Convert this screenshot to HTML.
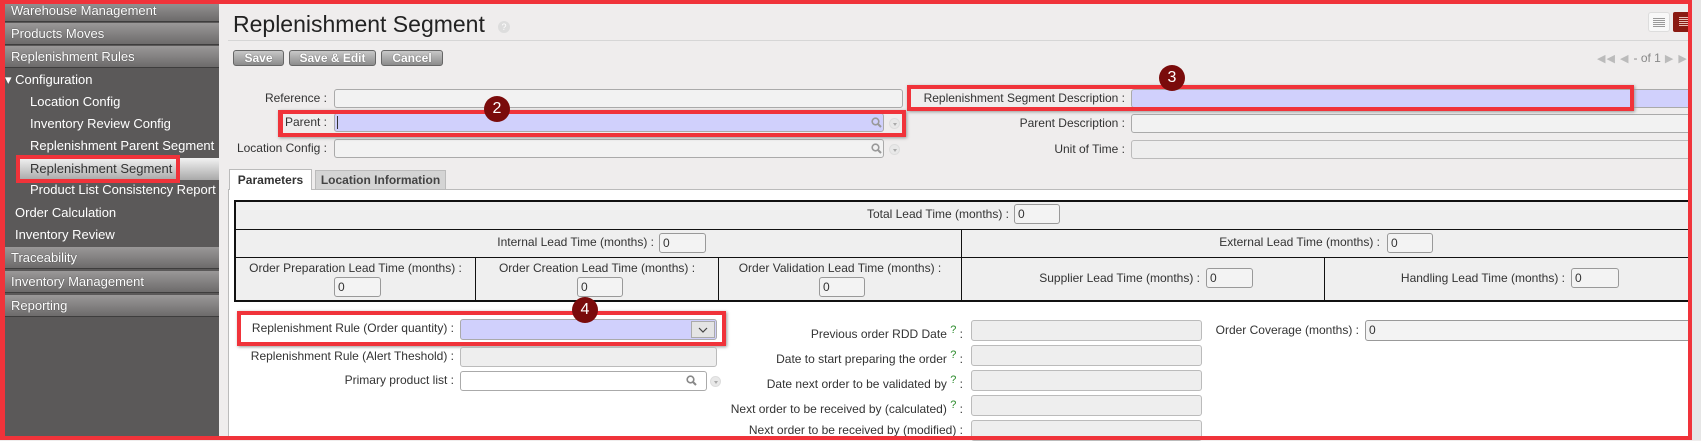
<!DOCTYPE html>
<html><head><meta charset="utf-8"><style>
*{box-sizing:border-box;margin:0;padding:0}
body{width:1701px;height:440px;overflow:hidden;background:#efeded;font-family:"Liberation Sans",Arial,sans-serif;font-size:12px;color:#333;position:relative}
.a{position:absolute}
#side{left:0;top:0;width:219px;height:440px;background:#5b5959}
.hd{position:absolute;left:5px;width:214px;height:22px;background:linear-gradient(#9a9898,#6d6b6b);color:#fff;font-size:13px;line-height:22px;padding-left:6px;border-bottom:1px solid #3e3d3d;text-shadow:0 0 1px #333}
.it{position:absolute;color:#fff;font-size:13px;line-height:20px;white-space:nowrap}
.lbl{position:absolute;text-align:right;white-space:nowrap;font-size:12px;color:#333;line-height:19px}
.inp{position:absolute;height:19px;border:1px solid #aaa;border-radius:3px;background:#f2f2f2}
.dis{background:#eeeeee;border-color:#bbb}
.lav{background:#d0d0fc}
.wh{background:#fff}
.btn{position:absolute;top:50px;height:16px;border:1px solid #666;border-radius:3px;background:linear-gradient(#c8c8c8,#8c8c8c);color:#fff;font-weight:bold;font-size:12px;text-align:center;line-height:14px;text-shadow:0 0 1px #444}
.red{position:absolute;border:4px solid #f0333a;box-shadow:1px 1px 3px #999}
.badge{position:absolute;width:26px;height:26px;border-radius:13px;background:#7a0b0b;color:#fff;font-size:16px;text-align:center;line-height:26px}
.num{position:absolute;height:20px;border:1px solid #999;border-radius:3px;background:#f3f3f3;font-size:12px;line-height:18px;padding-left:3px}
.q{color:#2a8a2a;font-size:11px;vertical-align:5px}
.dd{position:absolute;width:11px;height:11px;border-radius:6px;background:#e8e8e8;border:1px solid #ddd}
.dd:after{content:"";position:absolute;left:3px;top:4px;border:2px solid transparent;border-top:3px solid #aaa}
</style></head><body>
<div id="side" class="a">
<div class="hd" style="top:0">Warehouse Management</div>
<div class="hd" style="top:23px">Products Moves</div>
<div class="hd" style="top:46px">Replenishment Rules</div>
<div class="it" style="left:5px;top:70px">▾ Configuration</div>
<div class="it" style="left:30px;top:92px">Location Config</div>
<div class="it" style="left:30px;top:114px">Inventory Review Config</div>
<div class="it" style="left:30px;top:136px">Replenishment Parent Segment</div>
<div class="a" style="left:20px;top:158px;width:199px;height:22px;background:linear-gradient(#f2f2f2,#a9a9a9)"></div>
<div class="it" style="left:30px;top:158px;color:#333;line-height:22px">Replenishment Segment</div>
<div class="red" style="left:16px;top:155px;width:164px;height:28px;box-shadow:none"></div>
<div class="it" style="left:30px;top:180px">Product List Consistency Report</div>
<div class="it" style="left:15px;top:203px">Order Calculation</div>
<div class="it" style="left:15px;top:225px">Inventory Review</div>
<div class="hd" style="top:247px">Traceability</div>
<div class="hd" style="top:271px">Inventory Management</div>
<div class="hd" style="top:295px">Reporting</div>
</div>

<div class="a" style="left:233px;top:11px;font-size:23px;color:#222">Replenishment Segment</div>
<div class="a" style="left:498px;top:21px;width:12px;height:12px;border-radius:6px;background:#ddd;color:#fff;font-size:9px;text-align:center;line-height:12px">?</div>
<div class="a" style="left:228px;top:40px;width:1460px;height:1px;background:#d6d6d6"></div>
<div class="btn" style="left:233px;width:51px">Save</div>
<div class="btn" style="left:289px;width:87px">Save &amp; Edit</div>
<div class="btn" style="left:381px;width:62px">Cancel</div>
<div class="a" style="left:1648px;top:12px;width:22px;height:20px;border-radius:3px;background:#f8f8f8;border:1px solid #ddd"><div style="margin:5px 4px;height:9px;background:repeating-linear-gradient(#999 0 1px,transparent 1px 2px)"></div></div>
<div class="a" style="left:1673px;top:12px;width:22px;height:20px;border-radius:2px;background:#8a1a12"><div style="margin:5px 6px;height:9px;background:repeating-linear-gradient(#e8c0b8 0 1px,transparent 1px 2px)"></div></div>
<div class="a" style="left:1597px;top:51px;color:#bbb;font-size:11px;letter-spacing:1px">◀◀ ◀ <span style="color:#888;letter-spacing:0;font-size:12px">- of 1</span> ▶ ▶</div>

<div class="lbl" style="left:230px;width:97px;top:89px">Reference :</div>
<div class="inp" style="left:334px;top:89px;width:569px"></div>
<div class="lbl" style="left:230px;width:97px;top:113px">Parent :</div>
<div class="inp lav" style="left:334px;top:113px;width:550px"></div>
<div class="a" style="left:337px;top:116px;width:1px;height:13px;background:#333"></div>
<div class="lbl" style="left:230px;width:97px;top:139px">Location Config :</div>
<div class="inp" style="left:334px;top:139px;width:550px"></div>
<svg class="a" style="left:871px;top:117px" width="11" height="11"><circle cx="4.5" cy="4.5" r="3.3" fill="none" stroke="#999" stroke-width="1.6"/><path d="M7 7L10 10" stroke="#999" stroke-width="2"/></svg>
<svg class="a" style="left:871px;top:143px" width="11" height="11"><circle cx="4.5" cy="4.5" r="3.3" fill="none" stroke="#999" stroke-width="1.6"/><path d="M7 7L10 10" stroke="#999" stroke-width="2"/></svg>
<div class="dd" style="left:889px;top:118px"></div>
<div class="dd" style="left:889px;top:144px"></div>
<div class="red" style="left:278px;top:110px;width:628px;height:27px;border-left-width:5px"></div>
<div class="badge" style="left:484px;top:96px">2</div>

<div class="lbl" style="left:900px;width:225px;top:89px">Replenishment Segment Description :</div>
<div class="inp lav" style="left:1131px;top:89px;width:560px"></div>
<div class="lbl" style="left:900px;width:225px;top:114px">Parent Description :</div>
<div class="inp" style="left:1131px;top:114px;width:560px"></div>
<div class="lbl" style="left:900px;width:225px;top:140px">Unit of Time :</div>
<div class="inp dis" style="left:1131px;top:140px;width:560px"></div>
<div class="red" style="left:907px;top:85px;width:727px;height:26px"></div>
<div class="badge" style="left:1159px;top:65px">3</div>

<div class="a" style="left:228px;top:189px;width:1462px;height:251px;background:#fff;border:1px solid #bbb"></div>
<div class="a" style="left:229px;top:169px;width:83px;height:21px;background:#fff;border:1px solid #bbb;border-bottom:none;font-weight:bold;font-size:12px;line-height:20px;text-align:center;color:#333">Parameters</div>
<div class="a" style="left:315px;top:170px;width:131px;height:19px;background:#d4d4d4;border:1px solid #bbb;border-bottom:none;font-weight:bold;font-size:12px;line-height:18px;text-align:center;color:#444">Location Information</div>

<div class="a" style="left:234px;top:200px;width:1460px;height:102px;border:2px solid #111;border-right:none;background:#efefef"></div>
<div class="a" style="left:236px;top:229px;width:1458px;height:1px;background:#111"></div>
<div class="a" style="left:236px;top:257px;width:1458px;height:1px;background:#111"></div>
<div class="a" style="left:961px;top:229px;width:1px;height:72px;background:#111"></div>
<div class="a" style="left:475px;top:257px;width:1px;height:44px;background:#111"></div>
<div class="a" style="left:718px;top:257px;width:1px;height:44px;background:#111"></div>
<div class="a" style="left:1324px;top:257px;width:1px;height:44px;background:#111"></div>
<div class="lbl" style="left:700px;width:309px;top:205px">Total Lead Time (months) :</div><div class="num" style="left:1014px;top:204px;width:46px">0</div>
<div class="lbl" style="left:400px;width:254px;top:233px">Internal Lead Time (months) :</div><div class="num" style="left:659px;top:233px;width:47px">0</div>
<div class="lbl" style="left:1100px;width:280px;top:233px">External Lead Time (months) :</div><div class="num" style="left:1387px;top:233px;width:46px">0</div>
<div class="lbl" style="left:236px;width:239px;top:259px;text-align:center">Order Preparation Lead Time (months) :</div><div class="num" style="left:334px;top:277px;width:47px">0</div>
<div class="lbl" style="left:476px;width:242px;top:259px;text-align:center">Order Creation Lead Time (months) :</div><div class="num" style="left:577px;top:277px;width:46px">0</div>
<div class="lbl" style="left:719px;width:242px;top:259px;text-align:center">Order Validation Lead Time (months) :</div><div class="num" style="left:819px;top:277px;width:46px">0</div>
<div class="lbl" style="left:962px;width:238px;top:269px">Supplier Lead Time (months) :</div><div class="num" style="left:1206px;top:268px;width:47px">0</div>
<div class="lbl" style="left:1325px;width:240px;top:269px">Handling Lead Time (months) :</div><div class="num" style="left:1571px;top:268px;width:48px">0</div>

<div class="lbl" style="left:236px;width:218px;top:319px">Replenishment Rule (Order quantity) :</div>
<div class="inp lav" style="left:460px;top:319px;width:257px;height:21px"></div>
<div class="a" style="left:691px;top:321px;width:24px;height:17px;background:#e4e4e4;border:1px solid #aaa"><svg width="22" height="15"><path d="M7 6L11 10L15 6" fill="none" stroke="#444" stroke-width="1.2"/></svg></div>
<div class="red" style="left:237px;top:311px;width:489px;height:35px"></div>
<div class="badge" style="left:572px;top:297px">4</div>
<div class="lbl" style="left:236px;width:218px;top:347px">Replenishment Rule (Alert Theshold) :</div>
<div class="inp dis" style="left:460px;top:347px;width:257px;height:20px"></div>
<div class="lbl" style="left:236px;width:218px;top:371px">Primary product list :</div>
<div class="inp wh" style="left:460px;top:371px;width:247px;height:20px"></div>
<svg class="a" style="left:686px;top:375px" width="11" height="11"><circle cx="4.5" cy="4.5" r="3.3" fill="none" stroke="#888" stroke-width="1.6"/><path d="M7 7L10 10" stroke="#888" stroke-width="2"/></svg>
<div class="dd" style="left:710px;top:376px"></div>

<div class="lbl" style="left:700px;width:263px;top:321px">Previous order RDD Date <span class="q">?</span> :</div>
<div class="lbl" style="left:700px;width:263px;top:346px">Date to start preparing the order <span class="q">?</span> :</div>
<div class="lbl" style="left:700px;width:263px;top:371px">Date next order to be validated by <span class="q">?</span> :</div>
<div class="lbl" style="left:660px;width:303px;top:396px">Next order to be received by (calculated) <span class="q">?</span> :</div>
<div class="lbl" style="left:660px;width:303px;top:421px">Next order to be received by (modified) :</div>
<div class="inp dis" style="left:971px;top:320px;width:231px;height:21px"></div>
<div class="inp dis" style="left:971px;top:345px;width:231px;height:21px"></div>
<div class="inp dis" style="left:971px;top:370px;width:231px;height:21px"></div>
<div class="inp dis" style="left:971px;top:395px;width:231px;height:21px"></div>
<div class="inp dis" style="left:971px;top:420px;width:231px;height:21px"></div>
<div class="lbl" style="left:1200px;width:159px;top:321px">Order Coverage (months) :</div>
<div class="num" style="left:1365px;top:320px;width:330px;height:21px">0</div>

<div class="a" style="left:1692px;top:0;width:9px;height:440px;background:#e6e6e6"></div>
<div class="a" style="left:0;top:0;width:1692px;height:440px;border:4px solid #f0333a;border-left-width:5px"></div>
</body></html>
